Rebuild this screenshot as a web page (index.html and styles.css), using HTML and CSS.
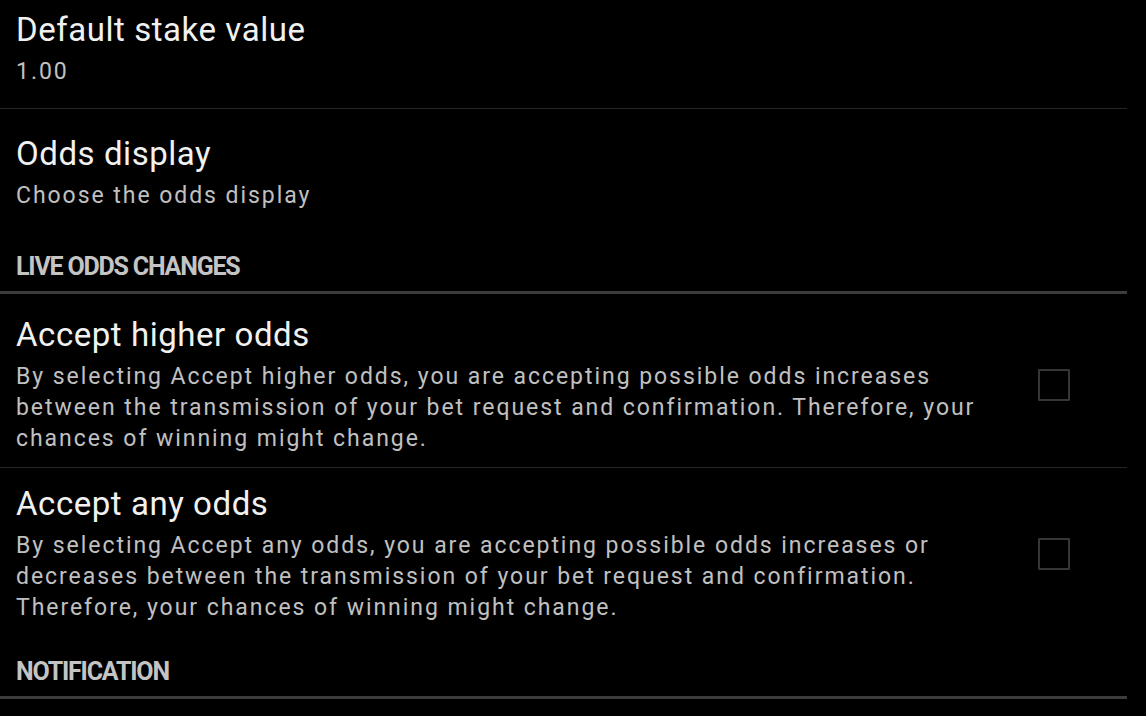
FILE: index.html
```html
<!DOCTYPE html>
<html lang="en">
<head>
<meta charset="utf-8">
<title>Settings</title>
<link rel="stylesheet" href="styles.css">
</head>
<body>
<div class="prefs">
  <div class="pref pref-first pref-divided">
    <div class="pref-text">
      <div class="pref-title">Default stake value</div>
      <div class="pref-summary">1.00</div>
    </div>
  </div>
  <div class="pref pref-plain">
    <div class="pref-text">
      <div class="pref-title">Odds display</div>
      <div class="pref-summary">Choose the odds display</div>
    </div>
  </div>
  <div class="category category-first">LIVE ODDS CHANGES</div>
  <div class="pref pref-check pref-divided">
    <div class="pref-text">
      <div class="pref-title">Accept higher odds</div>
      <div class="pref-summary">By selecting Accept higher odds, you are accepting possible odds increases between the transmission of your bet request and confirmation. Therefore, your chances of winning might change.</div>
    </div>
    <span class="checkbox"></span>
  </div>
  <div class="pref pref-check pref-last">
    <div class="pref-text">
      <div class="pref-title">Accept any odds</div>
      <div class="pref-summary">By selecting Accept any odds, you are accepting possible odds increases or decreases between the transmission of your bet request and confirmation. Therefore, your chances of winning might change.</div>
    </div>
    <span class="checkbox"></span>
  </div>
  <div class="category">NOTIFICATION</div>
</div>
</body>
</html>
```
FILE: styles.css
```css
html, body {
  margin: 0;
  padding: 0;
  background: #000;
}

body {
  font-family: Roboto, "Liberation Sans", sans-serif;
  width: 1146px;
  height: 716px;
  overflow: hidden;
}

.prefs {
  width: 1127px;
  display: flex;
  flex-direction: column;
}

.pref {
  display: flex;
  align-items: center;
  padding-left: 16px;
}

.pref-divided {
  border-bottom: 1px solid #252525;
}

.pref-first {
  padding-top: 10px;
  padding-bottom: 21px;
}

.pref-plain {
  padding-top: 25px;
  padding-bottom: 20px;
}

.pref-check {
  padding-top: 21px;
  padding-bottom: 13px;
}

.pref-last {
  padding-top: 16px;
  padding-bottom: 13px;
}

.pref-text {
  flex: 1;
  min-width: 0;
}

.pref-check .pref-text {
  max-width: 995px;
}

.pref-title {
  font-size: 33px;
  line-height: 40px;
  letter-spacing: 0.55px;
  color: #f1f1f1;
}

.pref-summary {
  margin-top: 6px;
  font-size: 23px;
  line-height: 31px;
  letter-spacing: 1.95px;
  color: #c0c0c0;
}

.checkbox {
  width: 28px;
  height: 28px;
  border: 2px solid #363636;
  border-radius: 1px;
  margin-left: auto;
  margin-right: 57px;
  flex-shrink: 0;
}

.category {
  padding: 22px 0 10px 16px;
  font-size: 25px;
  line-height: 28px;
  font-weight: 700;
  letter-spacing: -1.2px;
  color: #c4c4c4;
  border-bottom: 3px solid #3c3c3c;
}
```
